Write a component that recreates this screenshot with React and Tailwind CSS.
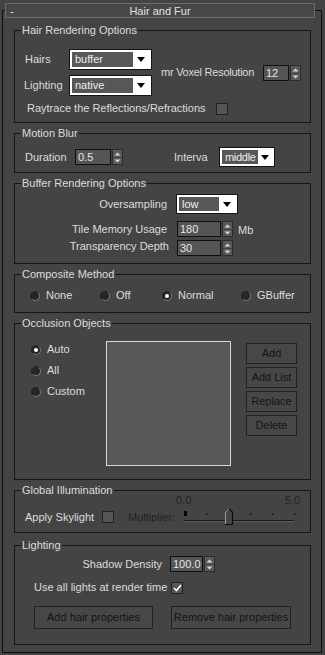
import React from 'react';

const Dropdown = ({ value, className, arrowClass = 'w-[16px]' }) => (
  <div className={`flex border border-[#141414] bg-white p-[2px] ${className}`}>
    <div className="flex-1 overflow-hidden whitespace-nowrap bg-[#575757] pl-[3px] leading-[15px] text-[#eeeeee]">{value}</div>
    <div className={`flex items-center justify-center ${arrowClass}`}>
      <svg width="8" height="5" viewBox="0 0 8 5">
        <path d="M0 0h8L4 5z" fill="#000" />
      </svg>
    </div>
  </div>
);

const Spinner = ({ value, inputClass }) => (
  <div className="flex h-[16px] gap-[1px]">
    <div className={`border border-[#111] bg-[#555] pl-[2px] leading-[14px] text-[#e6e6e6] ${inputClass}`}>{value}</div>
    <div className="w-[11px] border border-[#2c2c2c] bg-[#5a5a5a]">
      <svg width="9" height="14" viewBox="0 0 9 14">
        <path d="M1.5 5.5L4.5 2.5L7.5 5.5z" fill="#d4d4d4" />
        <path d="M0 7.5h9" stroke="#444" />
        <path d="M1.5 9.5L4.5 12.5L7.5 9.5z" fill="#d4d4d4" />
      </svg>
    </div>
  </div>
);

const Radio = ({ checked }) => (
  <span className="flex h-[10px] w-[10px] items-center justify-center rounded-full border border-[#7a7a7a] border-l-[#222] border-t-[#2a2a2a] bg-[#262626]">
    {checked && <span className="h-[4px] w-[4px] rounded-full bg-white" />}
  </span>
);

const Check = ({ checked }) => (
  <span className="flex h-[12px] w-[12px] items-center justify-center border border-[#222] bg-[#565656]">
    {checked && (
      <svg width="9" height="8" viewBox="0 0 9 8">
        <path d="M1 4l2.5 2.5L8 1" fill="none" stroke="#fff" strokeWidth="1.6" />
      </svg>
    )}
  </span>
);

const Button = ({ children, className }) => (
  <div className={`flex items-center justify-center border border-[#222] bg-[#474747] text-[#141414] ${className}`}>
    {children}
  </div>
);

const Group = ({ title, className, children }) => (
  <div className={`ml-[11px] w-[297px] border border-[#161616] ${className}`}>
    <div className="-mt-[7px] ml-[6px] w-fit bg-[#444] px-[1px] leading-[13px]">{title}</div>
    {children}
  </div>
);

export default function App() {
  return (
    <div className="h-[655px] w-[325px] overflow-hidden bg-[#444444] pt-[10px] font-['Liberation_Sans',Arial,sans-serif] text-[11px] leading-[13px] text-[#dcdcdc]">
      <div className="ml-[2px] h-[643px] w-[320px] border border-[#0f0f0f]">
        {/* rollout header */}
        <div className="-mt-[8px] ml-[2px] grid h-[15px] w-[310px] grid-cols-[1fr_auto_1fr] items-center border border-[#6c6c6c] bg-[#484848] text-[#e4e4e4]">
          <span className="pl-[4px] leading-[12px]">-</span>
          <span className="leading-[12px]">Hair and Fur</span>
          <span />
        </div>

        <Group title="Hair Rendering Options" className="mt-[12px] h-[93px]">
          <div className="mt-[12px] flex items-center">
            <div className="ml-[9px] flex flex-col gap-[5px]">
              <div className="flex h-[21px] items-center">
                <span className="w-[45px] pl-[1px]">Hairs</span>
                <Dropdown value="buffer" className="h-[21px] w-[83px]" />
              </div>
              <div className="flex h-[21px] items-center">
                <span className="w-[45px]">Lighting</span>
                <Dropdown value="native" className="h-[21px] w-[83px]" />
              </div>
            </div>
            <span className="ml-[9px] w-[102px] whitespace-nowrap tracking-[-0.25px]">mr Voxel Resolution</span>
            <Spinner value="12" inputClass="w-[26px]" />
          </div>
          <div className="ml-[12px] mt-[6px] flex h-[13px] items-center">
            <span>Raytrace the Reflections/Refractions</span>
            <span className="ml-[10px]"><Check /></span>
          </div>
        </Group>

        <Group title="Motion Blur" className="mt-[10px] h-[40px]">
          <div className="ml-[10px] mt-[7px] flex h-[20px] items-center">
            <span className="w-[50px]">Duration</span>
            <Spinner value="0.5" inputClass="w-[36px]" />
            <span className="ml-[51px] w-[45px]">Interva</span>
            <Dropdown value="middle" className="h-[20px] w-[56px] tracking-[-0.3px]" arrowClass="w-[14px]" />
          </div>
        </Group>

        <Group title="Buffer Rendering Options" className="mt-[10px] h-[81px]">
          <div className="mt-[4px] flex h-[20px] items-center">
            <span className="w-[152px] text-right">Oversampling</span>
            <Dropdown value="low" className="ml-[9px] h-[20px] w-[62px]" />
          </div>
          <div className="mt-[7px] flex h-[16px] items-center">
            <span className="w-[152px] text-right">Tile Memory Usage</span>
            <span className="ml-[10px]"><Spinner value="180" inputClass="w-[44px]" /></span>
            <span className="ml-[5px] mt-[3px]">Mb</span>
          </div>
          <div className="mt-[3px] flex h-[16px] items-center">
            <span className="mb-[3px] w-[154px] text-right">Transparency Depth</span>
            <span className="ml-[8px]"><Spinner value="30" inputClass="w-[44px]" /></span>
          </div>
        </Group>

        <Group title="Composite Method" className="mt-[10px] h-[39px]">
          <div className="ml-[15px] mt-[8px] flex h-[13px] items-center">
            {[
              ['None', false, 'w-[70px]'],
              ['Off', false, 'w-[62px]'],
              ['Normal', true, 'w-[79px]'],
              ['GBuffer', false, 'w-[60px]'],
            ].map(([label, on, w]) => (
              <div key={label} className={`flex items-center gap-[6px] ${w}`}>
                <Radio checked={on} />
                <span>{label}</span>
              </div>
            ))}
          </div>
        </Group>

        <Group title="Occlusion Objects" className="mt-[10px] h-[157px]">
          <div className="mt-[11px] flex items-start">
            <div className="ml-[16px] flex w-[75px] flex-col gap-[8px] pt-[2px]">
              {[
                ['Auto', true],
                ['All', false],
                ['Custom', false],
              ].map(([label, on]) => (
                <div key={label} className="flex h-[13px] items-center gap-[6px]">
                  <Radio checked={on} />
                  <span>{label}</span>
                </div>
              ))}
            </div>
            <div className="h-[125px] w-[125px] border border-[#d6d6d6] bg-[#575757]" />
            <div className="ml-[15px] flex w-[51px] flex-col gap-[3px] pt-[2px]">
              <Button className="h-[21px]">Add</Button>
              <Button className="h-[21px]">Add List</Button>
              <Button className="h-[21px]">Replace</Button>
              <Button className="h-[21px]">Delete</Button>
            </div>
          </div>
        </Group>

        <Group title="Global Illumination" className="mt-[10px] h-[43px]">
          <div className="-mt-[3px] flex h-[13px] items-center text-[#222]">
            <span className="ml-[161px]">0.0</span>
            <span className="ml-auto mr-[10px]">5.0</span>
          </div>
          <div className="ml-[10px] mt-[1px] flex h-[18px] items-center">
            <span className="w-[77px]">Apply Skylight</span>
            <Check />
            <span className="ml-[14px] w-[52px] text-[#222]">Multiplier:</span>
            <svg width="120" height="18" viewBox="0 0 120 18">
              <rect x="4" y="3" width="3" height="5" fill="#000" />
              {[26, 70, 92, 114].map((x) => (
                <rect key={x} x={x} y="5.5" width="1.5" height="1.5" fill="#111" />
              ))}
              <path d="M4 12.5h110" stroke="#1a1a1a" />
              <path d="M4 13.5h110" stroke="#5c5c5c" />
              <polygon points="45,16 45,4 49,0.5 53,4 53,16" fill="#474747" />
              <path d="M45.5 16V4.2L49 0.8" fill="none" stroke="#9a9a9a" />
              <path d="M49 0.8L52.5 4.2V16.5H45" fill="none" stroke="#0d0d0d" strokeWidth="1.2" />
            </svg>
          </div>
        </Group>

        <Group title="Lighting" className="mt-[12px] h-[100px]">
          <div className="mt-[4px] flex h-[16px] items-center">
            <span className="w-[147px] text-right">Shadow Density</span>
            <span className="ml-[8px]"><Spinner value="100.0" inputClass="w-[33px]" /></span>
          </div>
          <div className="ml-[19px] mt-[9px] flex h-[13px] items-center">
            <span className="w-[137px]">Use all lights at render time</span>
            <Check checked />
          </div>
          <div className="mt-[12px] flex h-[23px]">
            <Button className="ml-[19px] w-[119px]">Add hair properties</Button>
            <Button className="ml-[18px] w-[120px]">Remove hair properties</Button>
          </div>
        </Group>
      </div>
    </div>
  );
}
